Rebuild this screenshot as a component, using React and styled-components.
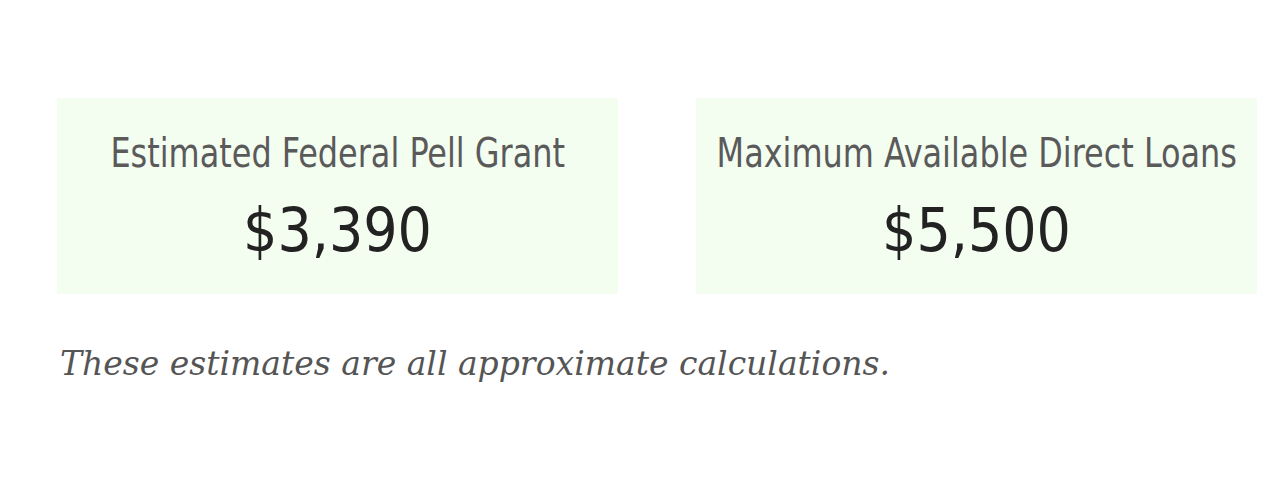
import React from 'react'
import styled, { createGlobalStyle } from 'styled-components'

const GlobalStyle = createGlobalStyle`
  html, body {
    margin: 0;
    padding: 0;
    background: #fff;
  }
`

const Page = styled.div`
  width: 1280px;
  height: 480px;
  box-sizing: border-box;
  padding: 98px 23px 0 57px;
`

const Cards = styled.div`
  display: grid;
  grid-template-columns: repeat(2, minmax(0, 1fr));
  column-gap: 78px;
`

const Card = styled.div`
  background: #f3fdf0;
  height: 196px;
  box-sizing: border-box;
  padding-top: 29px;
  display: flex;
  flex-direction: column;
  align-items: center;
  font-family: "DejaVu Sans Condensed", "DejaVu Sans", sans-serif;
  font-stretch: condensed;
`

const Label = styled.div`
  font-size: 41px;
  line-height: 52px;
  color: #5a5a5a;
  font-weight: 300;
  white-space: nowrap;
  transform: scaleX(0.865);
`

const Amount = styled.div`
  margin-top: 15px;
  font-size: 60px;
  line-height: 72px;
  color: #222;
  font-weight: 300;
  white-space: nowrap;
`

const Note = styled.p`
  margin: 50px 0 0 3px;
  font-family: "DejaVu Serif", serif;
  font-style: italic;
  font-size: 33px;
  line-height: 40px;
  color: #555;
`

const results = [
  { label: 'Estimated Federal Pell Grant', amount: '$3,390' },
  { label: 'Maximum Available Direct Loans', amount: '$5,500' },
]

const App = () => {
  return (
    <Page>
      <GlobalStyle />
      <Cards>
        {results.map((r) => (
          <Card key={r.label}>
            <Label>{r.label}</Label>
            <Amount>{r.amount}</Amount>
          </Card>
        ))}
      </Cards>
      <Note>These estimates are all approximate calculations.</Note>
    </Page>
  )
}

export default App
